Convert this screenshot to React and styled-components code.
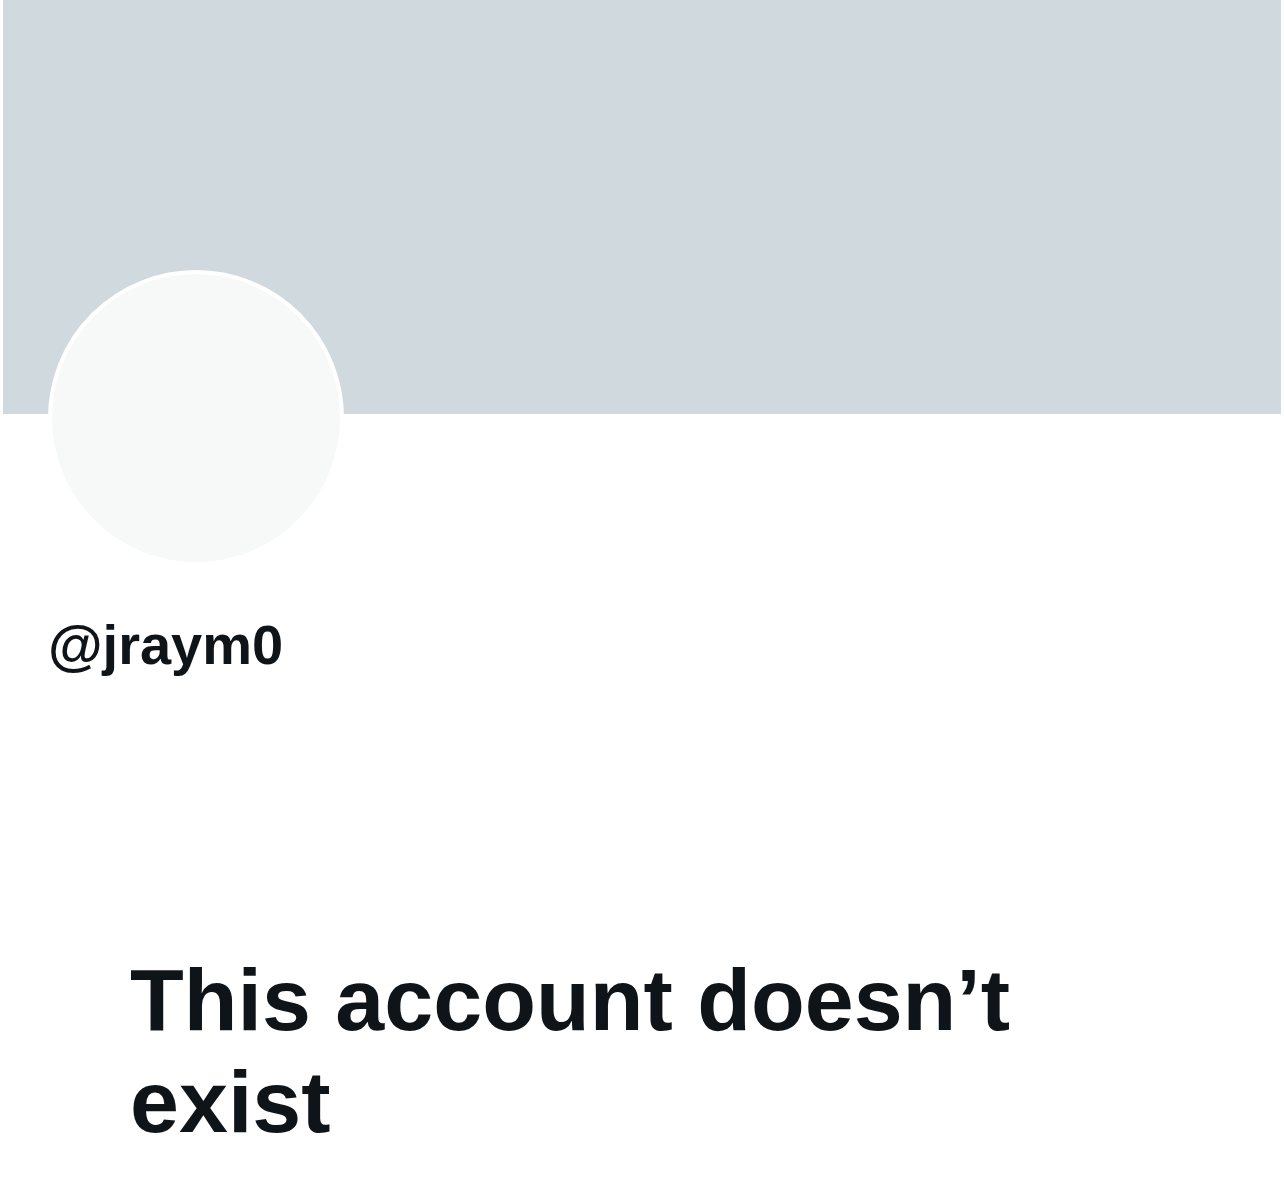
import React from 'react';
import styled, { createGlobalStyle } from 'styled-components';

const GlobalStyle = createGlobalStyle`
  body {
    margin: 0;
    background: #fff;
    font-family: "Liberation Sans", Arial, sans-serif;
    color: #0f1419;
  }
`;

const Page = styled.div`
  padding: 0 3px;
`;

const Banner = styled.div`
  height: 414px;
  background: #cfd9de;
`;

const Avatar = styled.div`
  width: 288px;
  height: 288px;
  margin: -144px 0 0 45px;
  border: 4px solid #fff;
  border-radius: 50%;
  background: #f7f9f9;
`;

const Handle = styled.div`
  margin: 47px 0 0 45px;
  font-size: 56px;
  line-height: 64px;
  font-weight: 700;
`;

const Heading = styled.h1`
  margin: 272px 0 0 127px;
  max-width: 960px;
  font-size: 88px;
  line-height: 102px;
  font-weight: 700;
`;

export default function App() {
  return (
    <Page>
      <GlobalStyle />
      <Banner />
      <Avatar />
      <Handle>@jraym0</Handle>
      <Heading>This account doesn’t exist</Heading>
    </Page>
  );
}
